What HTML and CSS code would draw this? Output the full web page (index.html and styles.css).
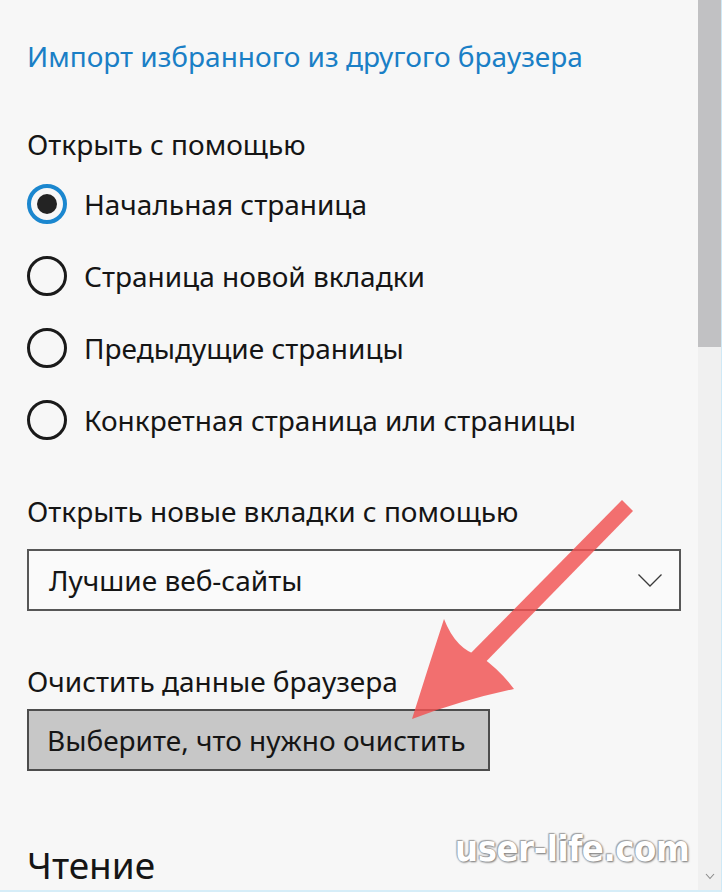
FILE: index.html
```html
<!DOCTYPE html>
<html lang="ru">
<head>
  <meta charset="UTF-8" />
  <meta name="viewport" content="width=device-width, initial-scale=1.0" />
  <title>Параметры</title>
  <link rel="stylesheet" href="styles.css">
</head>
<body>
  <div id="window">
    <main id="settings">
      <a class="import-link" href="#">Импорт избранного из другого браузера</a>

      <div class="group">
        <div class="label">Открыть с помощью</div>
        <div class="radio-list">
          <label class="radio checked"><span class="circle"></span>Начальная страница</label>
          <label class="radio"><span class="circle"></span>Страница новой вкладки</label>
          <label class="radio"><span class="circle"></span>Предыдущие страницы</label>
          <label class="radio"><span class="circle"></span>Конкретная страница или страницы</label>
        </div>
      </div>

      <div class="group tabs-group">
        <div class="label">Открыть новые вкладки с помощью</div>
        <div class="select">
          <span>Лучшие веб-сайты</span>
          <svg width="24" height="13" viewBox="0 0 24 13"><path d="M0.5 0.5 L12 12 L23.5 0.5" fill="none" stroke="#3a3a3a" stroke-width="1.3"/></svg>
        </div>
      </div>

      <div class="group clear-group">
        <div class="label">Очистить данные браузера</div>
        <button class="ctrl-btn">Выберите, что нужно очистить</button>
      </div>

      <h2 class="section-title">Чтение</h2>
    </main>

    <aside id="scrollbar">
      <div class="thumb"></div>
      <div class="track"></div>
      <svg class="scroll-down" width="10" height="7" viewBox="0 0 10 7"><path d="M1 1 L5 5.5 L9 1" fill="none" stroke="#8a8a8a" stroke-width="1.1"/></svg>
    </aside>

    <div class="watermark">user-life.com</div>

    <svg class="arrow" width="722" height="892" viewBox="0 0 722 892">
      <g opacity="0.82" fill="#f25252">
        <path d="M622 500 L633 511 L472 676 L460 664 Z"/>
        <path d="M412 719 Q428 668 444 619 Q456 650 480 656 Q500 670 514 689 Q462 700 412 719 Z"/>
      </g>
    </svg>
  </div>
</body>
</html>
```

FILE: styles.css
```css
body {
  margin: 0;
  padding: 0;
  background-color: #f7f7f7;
  font-family: 'Noto Sans', 'Open Sans', sans-serif;
  color: #151515;
  overflow: hidden;
}
#window {
  position: relative;
  width: 722px;
  height: 892px;
  display: flex;
  overflow: hidden;
  box-sizing: border-box;
  border-bottom: 2px solid #d6edf8;
}
#settings {
  flex: 1;
  display: flex;
  flex-direction: column;
  align-items: flex-start;
  padding: 38px 0 0 27px;
}
.import-link {
  color: #1a7fc6;
  text-decoration: none;
  font-size: 28px;
  line-height: 36px;
}
.label {
  font-size: 28px;
  line-height: 36px;
}
.group {
  margin-top: 52px;
}
.radio-list {
  display: flex;
  flex-direction: column;
  gap: 32px;
  margin-top: 22px;
}
.radio {
  display: flex;
  align-items: center;
  gap: 17px;
  height: 40px;
  font-size: 28px;
  line-height: 36px;
}
.radio .circle {
  width: 40px;
  height: 40px;
  box-sizing: border-box;
  border: 3.5px solid #1a1a1a;
  border-radius: 50%;
  display: flex;
  align-items: center;
  justify-content: center;
}
.radio.checked .circle {
  border: 4px solid #1b87cf;
}
.radio.checked .circle::after {
  content: '';
  width: 20px;
  height: 20px;
  border-radius: 50%;
  background: #232323;
}
.tabs-group {
  margin-top: 53px;
}
.select {
  margin-top: 20px;
  width: 654px;
  height: 62px;
  box-sizing: border-box;
  border: 2px solid #575757;
  background: #fafafa;
  display: flex;
  align-items: center;
  justify-content: space-between;
  padding: 0 17px 0 20px;
  font-size: 28px;
}
.clear-group {
  margin-top: 52px;
}
.ctrl-btn {
  margin-top: 10px;
  height: 62px;
  padding: 0 22px 0 18px;
  border: 2px solid #4d4d4d;
  background-color: #c7c7c7;
  font-family: inherit;
  font-size: 28px;
  color: #151515;
}
.section-title {
  font-weight: normal;
  font-size: 37px;
  line-height: 44px;
  margin: 72px 0 0 0;
}
#scrollbar {
  width: 24px;
  display: flex;
  flex-direction: column;
  align-items: center;
  background: #f0f0f0;
  border-right: 1px solid #cfe9f6;
  box-sizing: border-box;
}
.thumb {
  width: 100%;
  height: 347px;
  background: #c1c1c3;
}
.track {
  flex: 1;
}
.scroll-down {
  margin-bottom: 10px;
}
.watermark {
  position: absolute;
  left: 455px;
  top: 828px;
  font-family: 'DejaVu Sans Condensed', 'DejaVu Sans', sans-serif;
  font-weight: bold;
  font-size: 36px;
  letter-spacing: -0.4px;
  color: #ffffff;
  text-shadow: 0 0 2px #8a8a8a, 1px 1px 2px #777, -1px -1px 1px #aaa;
}
.arrow {
  position: absolute;
  left: 0;
  top: 0;
  pointer-events: none;
}
```
